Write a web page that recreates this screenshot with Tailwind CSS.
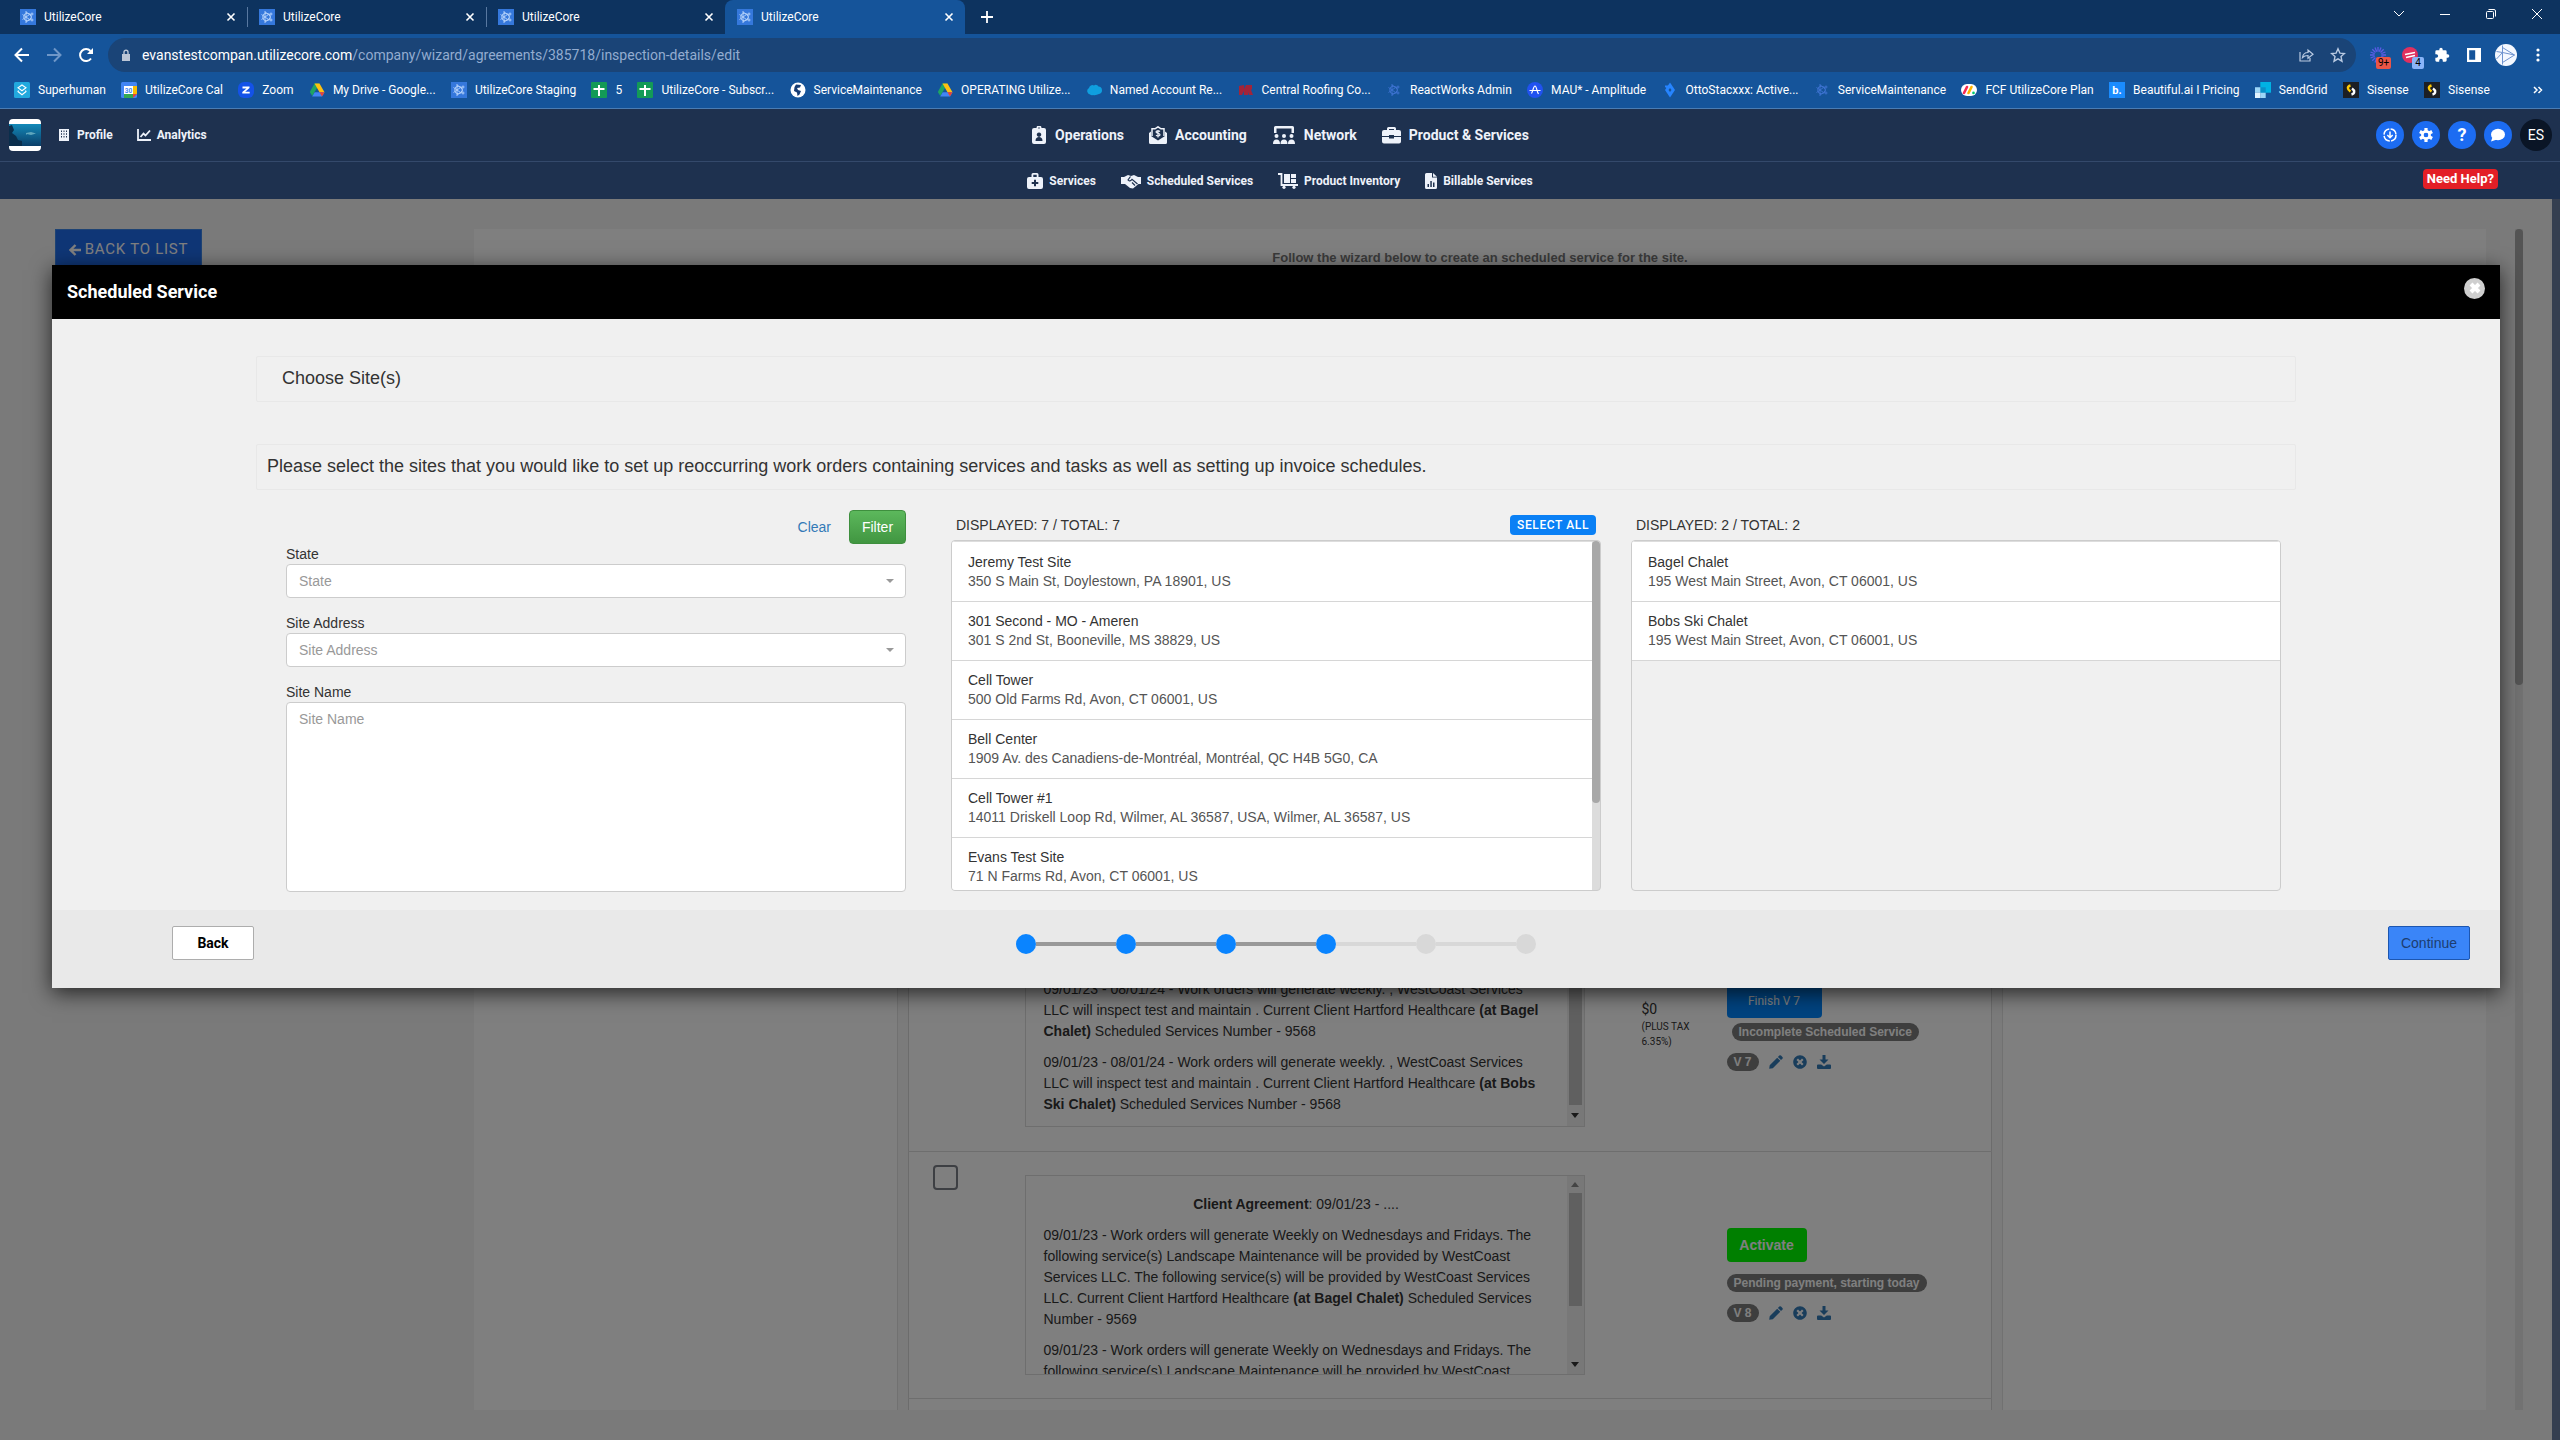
<!DOCTYPE html>
<html lang="en">
<head>
  <meta charset="UTF-8">
  <meta name="viewport" content="width=device-width, initial-scale=1.0">
  <title>UtilizeCore</title>
  <script src="https://cdn.jsdelivr.net/npm/@tailwindcss/browser@4"></script>
</head>
<body class="h-screen overflow-hidden flex flex-col font-['Liberation_Sans',Arial,sans-serif] text-sm text-[#333]">

  <!-- Icon sprite -->
  <svg class="hidden" xmlns="http://www.w3.org/2000/svg">
    <symbol id="i-core" viewBox="0 0 16 16"><g fill="none" stroke="currentColor" stroke-width="0.9"><path d="M6 2v12M6 3l6 4.500M6 13l6-4.500M2.500 5.500l7 5M2.500 10.500l7-5"/><circle cx="7.500" cy="8" r="3.800"/><circle cx="12" cy="5" r="1"/><circle cx="12" cy="11" r="1"/></g></symbol>
    <symbol id="i-utilize" viewBox="0 0 16 16"><rect width="16" height="16" fill="#3578dc"/><use href="#i-core" color="#b7d4fb"/></symbol>
    <symbol id="i-atom" viewBox="0 0 16 16"><use href="#i-core" color="#3f74d4"/></symbol>
    <symbol id="i-superhuman" viewBox="0 0 16 16"><rect width="16" height="16" rx="1.500" fill="#22a9de"/><g fill="none" stroke="#fff" stroke-width="1.100"><path d="M8 3l4 2.800L8 8.800 4 5.800zM4.500 8.500L4 9.500l4 3.200 4-3.200-.5-1"/></g></symbol>
    <symbol id="i-cal" viewBox="0 0 16 16"><rect width="16" height="16" rx="1.500" fill="#4285f4"/><path d="M12 4h4v8h-4z" fill="#fbbc04"/><path d="M3 12h9v4H3z" fill="#34a853"/><path d="M12 12h4l-4 4z" fill="#ea4335"/><path d="M3 4h9v8H3z" fill="#fff"/><text x="7.500" y="10.500" font-size="6.500" font-weight="700" text-anchor="middle" fill="#4285f4">30</text></symbol>
    <symbol id="i-zoom" viewBox="0 0 16 16"><rect width="16" height="16" rx="6" fill="#1452e8"/><path d="M4.500 4.500h7v1.600l-4.300 3.600h4.500v1.900H4.300V9.900l4.200-3.500h-4z" fill="#fff"/></symbol>
    <symbol id="i-drive" viewBox="0 0 16 16"><path d="M5.500 1.500h5L8 6 3.300 14 .8 10z" fill="#1fa463"/><path d="M5.500 1.500h5l5 8.800h-5z" fill="#fdc010"/><path d="M5.700 10.300h9.800L13 14.500H3.200z" fill="#4285f4"/><path d="M10.500 10.300h5L13 14.500z" fill="#ea4335"/></symbol>
    <symbol id="i-sheet" viewBox="0 0 16 16"><rect width="16" height="16" rx="1" fill="#139a56"/><path d="M7 3h2v3h4.500v2H9v6H7V8H2.500V6H7z" fill="#fff"/></symbol>
    <symbol id="i-globe" viewBox="0 0 16 16"><circle cx="8" cy="8" r="7.500" fill="#fff"/><path d="M6 2.500l5 .5-1 2.500-3 .500 1 2 3 1-1.500 3.500-2 1.500-.5-3.500-3-1.500L4.500 5z" fill="#173d75"/></symbol>
    <symbol id="i-cloud" viewBox="0 0 16 16"><path d="M4 12.500a3.500 3.500 0 0 1-1-6.500 3.500 3.500 0 0 1 5-2.500 3 3 0 0 1 4.500 1A3.800 3.800 0 0 1 13 12c-2 1-4 1.500-6 1-1 .5-2 .3-3-.5z" fill="#0f9fdf"/></symbol>
    <symbol id="i-roof" viewBox="0 0 16 16"><path d="M1 4l5-1v4l2-4h6v4l-1 1 2 5h-4l-1-3v3H6V9l-2 4H1z" fill="#a32439"/></symbol>
    <symbol id="i-amp" viewBox="0 0 16 16"><circle cx="8" cy="8" r="8" fill="#2152f0"/><path d="M2.500 8.500h11M4.500 11.500C6 9 6.500 4 8 4s2 6 3.500 8" fill="none" stroke="#fff" stroke-width="1.200"/></symbol>
    <symbol id="i-jira" viewBox="0 0 16 16"><path d="M8 .5L13 8 8 15.500 3 8z" fill="#2684ff"/><path d="M3 3.500h5v5L3 5z" fill="#2684ff"/><path d="M8 6l1.500 2L8 10 6.500 8z" fill="#15549a"/></symbol>
    <symbol id="i-monday" viewBox="0 0 16 16"><rect y="2" width="16" height="12" rx="6" fill="#fff"/><g stroke-width="2.600" stroke-linecap="round"><path d="M3 11l3-6" stroke="#f62b54"/><path d="M7.500 11l3-6" stroke="#ffb400"/><path d="M12.500 10.800v.100" stroke="#00ca72"/></g></symbol>
    <symbol id="i-beautiful" viewBox="0 0 16 16"><rect width="16" height="16" fill="#1a8cff"/><text x="8" y="12" font-size="11" font-weight="700" text-anchor="middle" fill="#fff">b.</text></symbol>
    <symbol id="i-sendgrid" viewBox="0 0 16 16"><path d="M5.300 0H16v10.700H5.300z" fill="#00b2e3"/><path d="M5.300 5.300h5.400v5.400H5.300z" fill="#0a8fc7"/><path d="M0 5.300h5.300v5.400H0zM5.300 10.700h5.400V16H5.300z" fill="#9dd6f7"/><path d="M0 10.700h5.300V16H0z" fill="#e3f4ff"/></symbol>
    <symbol id="i-sisense" viewBox="0 0 16 16"><rect width="16" height="16" fill="#1c1f24"/><path d="M7.500 3.500C4 4.500 4 7 7.500 9.500" fill="none" stroke="#ffcb05" stroke-width="2.400"/><path d="M9 6.500c3 2 3 5-.5 6" fill="none" stroke="#fff" stroke-width="2.400"/></symbol>
    <symbol id="i-close" viewBox="0 0 16 16"><path d="M4.500 4.500l7 7M11.500 4.500l-7 7" fill="none" stroke="currentColor" stroke-width="1.600"/></symbol>
    <symbol id="i-pencil" viewBox="0 0 14 14"><path d="M10.300.6a1.200 1.200 0 0 1 1.700 0l1.400 1.400a1.200 1.200 0 0 1 0 1.700L12 5.100 8.900 2zM8.200 2.700l3.100 3.100-7.500 7.500L.2 13.800l.5-3.600z" fill="currentColor"/></symbol>
    <symbol id="i-times" viewBox="0 0 512 512"><path fill="currentColor" d="M256 8C119 8 8 119 8 256s111 248 248 248 248-111 248-248S393 8 256 8zm121.600 313.100c4.700 4.700 4.700 12.300 0 17L338 377.600c-4.700 4.700-12.300 4.700-17 0L256 312l-65.100 65.600c-4.700 4.700-12.300 4.700-17 0L134.400 338c-4.700-4.700-4.700-12.300 0-17l65.600-65-65.600-65.100c-4.700-4.700-4.700-12.300 0-17l39.600-39.600c4.700-4.700 12.300-4.700 17 0l65 65.700 65.100-65.600c4.700-4.700 12.300-4.700 17 0l39.600 39.600c4.700 4.700 4.700 12.300 0 17L312 256l65.600 65.100z"/></symbol>
    <symbol id="i-download" viewBox="0 0 14 14"><path d="M5.500 0h3v4.500h3L7 9 2.500 4.500h3zM1 9.500h3.200L7 11.500l2.800-2H13a1 1 0 0 1 1 1V13a1 1 0 0 1-1 1H1a1 1 0 0 1-1-1v-2.500a1 1 0 0 1 1-1z" fill="currentColor"/></symbol>
  </svg>

  <!-- Browser tabs -->
  <div class="shrink-0 h-[34px] bg-[#0d335f] flex items-stretch text-white text-xs font-['Roboto',sans-serif]">
    <div class="flex-1 flex">
      <div class="w-2"></div>
      <div class="w-[239px] flex items-center gap-2 pl-3 pr-2"><svg class="size-4"><use href="#i-utilize"/></svg><span class="flex-1">UtilizeCore</span><button aria-label="Close tab" class="size-4"><svg class="size-4"><use href="#i-close"/></svg></button></div>
      <div class="w-[239px] flex items-center gap-2 pl-3 pr-2"><span class="absolute -ml-3 w-px h-5 bg-[#5878a0]"></span><svg class="size-4"><use href="#i-utilize"/></svg><span class="flex-1">UtilizeCore</span><button aria-label="Close tab" class="size-4"><svg class="size-4"><use href="#i-close"/></svg></button></div>
      <div class="w-[239px] flex items-center gap-2 pl-3 pr-2"><span class="absolute -ml-3 w-px h-5 bg-[#5878a0]"></span><svg class="size-4"><use href="#i-utilize"/></svg><span class="flex-1">UtilizeCore</span><button aria-label="Close tab" class="size-4"><svg class="size-4"><use href="#i-close"/></svg></button></div>
      <div class="w-[240px] flex items-center gap-2 pl-3 pr-2 bg-[#15549a] rounded-t-lg"><svg class="size-4"><use href="#i-utilize"/></svg><span class="flex-1">UtilizeCore</span><button aria-label="Close tab" class="size-4"><svg class="size-4"><use href="#i-close"/></svg></button></div>
      <button aria-label="New tab" class="ml-[14px]"><svg class="size-4" viewBox="0 0 16 16"><path d="M8 2v12M2 8h12" stroke="currentColor" stroke-width="1.800"/></svg></button>
    </div>
    <div class="flex h-7">
      <button aria-label="Search tabs" class="w-[46px] grid place-items-center"><svg class="size-3" viewBox="0 0 12 12"><path d="M1 3l5 5 5-5" fill="none" stroke="currentColor"/></svg></button>
      <button aria-label="Minimize" class="w-[46px] grid place-items-center"><svg class="size-3" viewBox="0 0 12 12"><path d="M1 6.500h10" stroke="currentColor"/></svg></button>
      <button aria-label="Restore" class="w-[46px] grid place-items-center"><svg class="size-3" viewBox="0 0 12 12"><g fill="none" stroke="currentColor"><rect x="1.500" y="3.500" width="7" height="7" rx="1"/><path d="M3.500 1.500H9a1.500 1.500 0 0 1 1.500 1.500v5.500"/></g></svg></button>
      <button aria-label="Close window" class="w-[46px] grid place-items-center"><svg class="size-3" viewBox="0 0 12 12"><path d="M1 1l10 10M11 1L1 11" stroke="currentColor"/></svg></button>
    </div>
  </div>

  <!-- Address bar -->
  <div class="shrink-0 h-[38px] pt-1 bg-[#15549a] flex items-center text-white font-['Roboto',sans-serif]">
    <div class="w-[108px] pl-[14px] flex gap-4">
      <button aria-label="Back"><svg class="size-4" viewBox="0 0 16 16"><path d="M8 1.500L1.500 8 8 14.500M1.500 8H15" fill="none" stroke="currentColor" stroke-width="2"/></svg></button>
      <button aria-label="Forward" class="text-[#6f97c8]"><svg class="size-4" viewBox="0 0 16 16"><path d="M8 1.500L14.500 8 8 14.500M14.500 8H1" fill="none" stroke="currentColor" stroke-width="2"/></svg></button>
      <button aria-label="Reload"><svg class="size-4" viewBox="0 0 16 16"><path d="M13 11.500A6 6 0 1 1 12.500 4" fill="none" stroke="currentColor" stroke-width="2"/><path d="M15 1v6H9z" fill="currentColor"/></svg></button>
    </div>
    <div class="flex-1 h-[34px] rounded-full bg-[#1a4477] flex items-center pl-3 pr-[10px]">
      <svg class="w-3 h-3" viewBox="0 0 12 12"><path d="M2 5h8v7H2z" fill="#bcc6d6"/><path d="M4 5V3.200a2 2 0 0 1 4 0V5" fill="none" stroke="#bcc6d6" stroke-width="1.400"/></svg>
      <p class="flex-1 pl-[10px] text-sm">evanstestcompan.utilizecore.com<span class="text-[#93acd0]">/company/wizard/agreements/385718/inspection-details/edit</span></p>
      <button aria-label="Share" class="mr-4 text-[#b9cae2]"><svg class="size-4" viewBox="0 0 16 16"><g fill="none" stroke="currentColor" stroke-width="1.200"><path d="M2 5v9h10v-3"/><path d="M4.500 10.500c.5-3.500 2.500-5 5.500-5V3l5 4.200-5 4V8.500c-2.500 0-4 .5-5.500 2z"/></g></svg></button>
      <button aria-label="Bookmark" class="text-[#b9cae2]"><svg class="size-4" viewBox="0 0 16 16"><path d="M8 1.800l1.900 4.300 4.600.4-3.500 3.100 1 4.600L8 11.800l-4 2.400 1-4.600L1.500 6.500l4.600-.4z" fill="none" stroke="currentColor" stroke-width="1.400"/></svg></button>
    </div>
    <div class="flex items-center gap-4 pl-[14px] pr-[14px]">
      <button aria-label="Loom" class="relative size-4 text-black"><svg class="size-4" viewBox="0 0 16 16"><path d="M8 0v16M0 8h16M2.300 2.300l11.400 11.400M13.700 2.300L2.300 13.700M5 .6l6 14.800M11 .6L5 15.400M.6 5l14.800 6M.6 11l14.800-6" stroke="#5b5ce6" stroke-width="1.300"/><circle cx="8" cy="8" r="3.500" fill="#15549a"/></svg><span class="absolute left-1.5 top-2.5 px-0.5 h-3 rounded-xs bg-[#ea5547] text-[10px] leading-3">9+</span></button>
      <button aria-label="Extension" class="relative size-4 text-black"><svg class="size-4" viewBox="0 0 16 16"><circle cx="8" cy="8" r="8" fill="#e0305f"/><path d="M3 7.500l10-2M4 10.500l9-2" stroke="#fff" stroke-width="1.600"/></svg><span class="absolute left-2.5 top-2.5 px-0.5 w-3 h-3 rounded-xs bg-[#8ab4f8] text-[10px] leading-3">4</span></button>
      <button aria-label="Extensions"><svg class="size-4" viewBox="0 0 24 24"><path d="M20.500 11H19V7a2 2 0 0 0-2-2h-4V3.500a2.500 2.500 0 0 0-5 0V5H4a2 2 0 0 0-2 2v3.800h1.500a2.700 2.700 0 0 1 0 5.400H2V20a2 2 0 0 0 2 2h3.800v-1.500a2.700 2.700 0 0 1 5.400 0V22H17a2 2 0 0 0 2-2v-4h1.500a2.500 2.500 0 0 0 0-5z" fill="currentColor"/></svg></button>
      <button aria-label="Side panel"><svg class="size-4" viewBox="0 0 16 16"><path d="M1 1h14v14H1zM3.200 3.200v9.600h6V3.200z" fill="currentColor" fill-rule="evenodd"/></svg></button>
      <button aria-label="Profile" class="-mx-[3px]"><svg class="size-[22px]" viewBox="0 0 22 22"><circle cx="11" cy="11" r="11" fill="#f4f8ff"/><g fill="none" stroke="#6f93cf"><path d="M7.500 1.500v19M7.500 3.500l12 7.500-12 7.500M1.500 7.500l6 1 12 2.500M1.500 15l6-6.500"/></g></svg></button>
      <button aria-label="Menu"><svg class="w-4 h-4" viewBox="0 0 16 16" fill="currentColor"><circle cx="8" cy="3" r="1.600"/><circle cx="8" cy="8" r="1.600"/><circle cx="8" cy="13" r="1.600"/></svg></button>
    </div>
  </div>

  <!-- Bookmarks -->
  <div class="shrink-0 h-[37px] bg-[#15549a] border-b border-[#4a7cb3] flex items-center pl-[14px] pr-[14px] text-white text-xs font-['Roboto',sans-serif]">
    <nav id="bookmarks" class="flex-1 flex justify-between whitespace-nowrap"></nav>
    <button aria-label="More bookmarks" class="w-14 flex justify-end"><svg class="size-4" viewBox="0 0 16 16"><path d="M4 5l3 3-3 3M8.500 5l3 3-3 3" fill="none" stroke="currentColor" stroke-width="1.500"/></svg></button>
  </div>

  <!-- App header -->
  <header class="shrink-0 bg-[#1e314f] text-[#eef2fa] font-bold font-['Roboto',sans-serif]">
    <div class="h-[53px] border-b border-[#34496b] grid grid-cols-[1fr_auto_1fr] items-center">
      <div class="flex items-center pl-[9px] text-xs">
        <svg class="size-8 rounded-sm" viewBox="0 0 32 32"><defs><linearGradient id="sea" x2="0" y2="1"><stop stop-color="#1389b8"/><stop offset="1" stop-color="#0b3f69"/></linearGradient></defs><path fill="#fff" d="M0 0h32v32H0z"/><path fill="url(#sea)" d="M0 5h32v22H0z"/><path fill="#0a2e4c" d="M0 7l3-1 2 5-2 3 4 3 2 4 4 1v5H0z"/><path fill="#5fa7bd" d="M17 14l5-1 5 1.500-5 1.500-4-1-1 1z"/></svg>
        <a href="#" class="ml-[17px] flex items-center gap-[7px]"><svg class="w-3 h-3" viewBox="0 0 12 12"><path fill="currentColor" fill-rule="evenodd" d="M1 0h10v12H1zM3 1.500V3h1V1.500zm2.500 0V3h1V1.500zm2.500 0V3h1V1.500zM3 4.200v1.500h1V4.200zm2.500 0v1.500h1V4.200zm2.500 0v1.500h1V4.200zM3 7v1.500h1V7zm2.500 0v1.500h1V7zM8 7v1.500h1V7z"/></svg>Profile</a>
        <a href="#" class="ml-6 flex items-center gap-1.5"><svg class="w-[14px] h-3" viewBox="0 0 14 12"><path fill="none" stroke="currentColor" stroke-width="1.800" d="M1 0v11h13M3.500 8l3-3.500 2 2L13 1.500"/></svg>Analytics</a>
      </div>
      <nav class="flex items-center gap-[25px]">
        <a href="#" class="flex items-center gap-2"><svg class="w-4 h-[18px]" viewBox="0 0 16 18"><path fill="currentColor" fill-rule="evenodd" d="M5.500 2a2.500 2.500 0 0 1 5 0H13a2 2 0 0 1 2 2v12a2 2 0 0 1-2 2H3a2 2 0 0 1-2-2V4a2 2 0 0 1 2-2zM8 1.300a.7.700 0 1 0 .01 0zM8 6.500a2.200 2.200 0 1 0 .01 0zM4.500 15h7c0-3-1.500-4-3.500-4s-3.500 1-3.500 4z"/></svg>Operations</a>
        <a href="#" class="flex items-center gap-2"><svg class="w-[18px] h-[18px]" viewBox="0 0 18 18"><path fill="currentColor" d="M0 7l2-1.500V10l7 4.500 7-4.500V5.500L18 7v9.500a1.500 1.500 0 0 1-1.500 1.500h-15A1.500 1.500 0 0 1 0 16.500z"/><path fill="none" stroke="currentColor" stroke-width="1.500" d="M3 10V2.800h3L9 .8l3 2h3V10"/><path fill="none" stroke="currentColor" stroke-width="1.200" d="M11 5.500c-1-1-4-.8-4 .6 0 1.600 4 1 4 2.600 0 1.500-3 1.500-4 .5M9 4v7.500"/></svg>Accounting</a>
        <a href="#" class="flex items-center gap-2"><svg class="w-6 h-[18px]" viewBox="0 0 24 18"><g fill="currentColor"><path d="M2 7V1.500A1.500 1.500 0 0 1 3.500 0h17A1.500 1.500 0 0 1 22 1.500V7h-2.500V2.500h-15V7z"/><circle cx="4.500" cy="10" r="2"/><circle cx="12" cy="10" r="2"/><circle cx="19.500" cy="10" r="2"/><path d="M1 18c0-3 1-4.500 3.500-4.500S8 15 8 18zM8.500 18c0-3 1-4.500 3.500-4.500s3.500 1.500 3.500 4.500zM16 18c0-3 1-4.500 3.500-4.500S23 15 23 18z"/></g></svg>Network</a>
        <a href="#" class="flex items-center gap-2"><svg class="w-[19px] h-[18px]" viewBox="0 0 19 18"><path fill="currentColor" fill-rule="evenodd" d="M5 4V2.500A1.500 1.500 0 0 1 6.500 1h6A1.500 1.500 0 0 1 14 2.500V4h3a2 2 0 0 1 2 2v4h-7V9H7v1H0V6a2 2 0 0 1 2-2zM7 4h5V3H7z"/><path fill="currentColor" d="M0 11h7v1.500h5V11h7v4.500a2 2 0 0 1-2 2H2a2 2 0 0 1-2-2z"/></svg>Product &amp; Services</a>
      </nav>
      <div class="flex items-center justify-end gap-2 pr-2">
        <button aria-label="Downloads" class="size-7 rounded-full bg-[#1c6cf2] grid place-items-center"><svg class="size-4" viewBox="0 0 16 16"><circle cx="8" cy="8" r="6" fill="none" stroke="#fff" stroke-width="1.500" stroke-dasharray="8 1.400"/><path d="M8 4.500v6M5.300 8L8 10.700 10.700 8" fill="none" stroke="#fff" stroke-width="1.500"/></svg></button>
        <button aria-label="Settings" class="size-7 rounded-full bg-[#1c6cf2] grid place-items-center"><svg class="size-4" viewBox="0 0 16 16"><path d="M8 1v14M1.900 4.500l12.200 7M1.900 11.500l12.200-7" stroke="#fff" stroke-width="3.200"/><circle cx="8" cy="8" r="3.600" fill="#1c6cf2" stroke="#fff" stroke-width="2.600"/><circle cx="8" cy="8" r="2.100" fill="#1c6cf2"/></svg></button>
        <button aria-label="Help" class="size-7 rounded-full bg-[#1c6cf2] grid place-items-center text-lg leading-7 font-bold text-white">?</button>
        <button aria-label="Chat" class="size-7 rounded-full bg-[#1c6cf2] grid place-items-center"><svg class="size-4" viewBox="0 0 16 16"><ellipse cx="8" cy="7.500" rx="7" ry="5.800" fill="#fff"/><path d="M2.500 10L1 14.500l6-2z" fill="#fff"/></svg></button>
        <button class="size-8 rounded-full bg-[#0a1526] text-sm font-normal text-white">ES</button>
      </div>
    </div>
    <div class="h-[37px] grid grid-cols-[1fr_auto_1fr] items-center text-xs">
      <div></div>
      <nav class="flex items-center gap-[25px]">
        <a href="#" class="flex items-center gap-1.5"><svg class="size-4" viewBox="0 0 16 16"><path fill="currentColor" fill-rule="evenodd" d="M4.500 4V1.500A1.500 1.500 0 0 1 6 0h4a1.500 1.500 0 0 1 1.500 1.500V4H14a2 2 0 0 1 2 2v8a2 2 0 0 1-2 2H2a2 2 0 0 1-2-2V6a2 2 0 0 1 2-2zM6.300 4h3.400V1.800H6.300zM7 6.700v2.300H4.700v2H7v2.300h2V11h2.300V9H9V6.700z"/></svg>Services</a>
        <a href="#" class="flex items-center gap-1.5"><svg class="w-5 h-4" viewBox="0 0 20 16"><path fill="currentColor" d="M0 4h3l4-2 3 1 3-1 4 2h3v7h-2.500L12 15.500 9 15l-5-4H0z"/><path fill="none" stroke="#1e314f" stroke-width="1.200" d="M9.500 3.500L7 7c1 1.500 2.500 1 4-.7L16.500 11M11 9.500l3 3"/></svg>Scheduled Services</a>
        <a href="#" class="flex items-center gap-1.5"><svg class="w-5 h-4" viewBox="0 0 20 16"><path fill="none" stroke="currentColor" stroke-width="1.800" d="M0 1h3.500v11H20"/><g fill="currentColor"><path d="M6 1h6v9H6zM13 1h5v4h-5zM13 6h5v4h-5z"/><circle cx="6" cy="14.300" r="1.600"/><circle cx="16" cy="14.300" r="1.600"/></g></svg>Product Inventory</a>
        <a href="#" class="flex items-center gap-1.5"><svg class="w-3 h-4" viewBox="0 0 12 16"><path fill="currentColor" fill-rule="evenodd" d="M1.500 0H7v4.500h5v10a1.500 1.500 0 0 1-1.500 1.500h-9A1.500 1.500 0 0 1 0 14.500v-13A1.500 1.500 0 0 1 1.500 0zM8 0l4 3.700H8zM2.500 11v3H4v-3zm2.800-3v6h1.500V8zM8 9.500V14h1.500V9.500z"/></svg>Billable Services</a>
      </nav>
      <div class="flex justify-end pr-[62px] pb-1"><button class="h-5 px-1 rounded-sm bg-[#e31f26] text-white text-[13px] leading-5">Need Help?</button></div>
    </div>
  </header>

  <div class="flex-1 min-h-0 flex">
    <div class="flex-1 relative flex bg-[#f4f4f4] overflow-hidden">

      <!-- Page under the dialog -->
      <aside class="w-[474px] pt-[30px] pl-[55px]">
        <button class="w-[147px] h-[42px] border border-[#3d87e8] bg-[#1f6cec] text-white font-['Roboto',sans-serif] text-[15px] tracking-wider flex items-center justify-center gap-1"><svg class="size-3" viewBox="0 0 12 12"><path d="M6.500 1l-5 5 5 5M2 6h10" fill="none" stroke="currentColor" stroke-width="2.400"/></svg>BACK TO LIST</button>
      </aside>
      <main class="flex-1 my-[30px] bg-white flex flex-col overflow-hidden">
        <p class="pt-[19px] text-center font-bold text-[13px] leading-5 text-[#777]">Follow the wizard below to create an scheduled service for the site.</p>
        <div class="flex-1 min-h-0 grid grid-cols-[423fr_1106fr_483fr]">
          <div></div>
          <div class="min-h-0 flex flex-col justify-end px-[10px] bg-[#f6f6f6] border-x border-[#e2e2e2]">
            <table class="w-full shrink-0 table-fixed bg-white border-x border-[#d8d8d8] border-collapse">
              <colgroup><col class="w-[116px]"><col class="w-[617px]"><col class="w-[85px]"><col></colgroup>
              <tbody>
                <tr class="h-[247px] border-b border-[#dcdcdc]">
                  <td></td>
                  <td>
                    <div class="w-[560px] h-[200px] border border-[#dcdcdc] flex">
                      <div class="flex-1 min-w-0 overflow-hidden flex flex-col justify-end gap-[10px] px-[18px] pb-[11px] leading-[21px]">
                        <p>09/01/23 - 08/01/24 - Work orders will generate weekly. , WestCoast Services LLC will inspect test and maintain . Current Client Hartford Healthcare <b>(at Bagel Chalet)</b> Scheduled Services Number - 9568</p>
                        <p>09/01/23 - 08/01/24 - Work orders will generate weekly. , WestCoast Services LLC will inspect test and maintain . Current Client Hartford Healthcare <b>(at Bobs Ski Chalet)</b> Scheduled Services Number - 9568</p>
                      </div>
                      <div class="w-[17px] bg-[#f1f1f1] flex flex-col items-center">
                        <div class="mt-[40px] flex-1 w-[13px] bg-[#c1c1c1]"></div>
                        <div class="h-[21px] grid place-items-center"><svg class="w-2 h-[5px]" viewBox="0 0 8 5"><path d="M0 0h8L4 5z" fill="#333"/></svg></div>
                      </div>
                    </div>
                  </td>
                  <td class="font-['Roboto',sans-serif] text-sm leading-5"><div class="pb-1.5">$0<br><span class="block text-[10px] leading-[15px]">(PLUS TAX<br>6.35%)</span></div></td>
                  <td>
                    <button class="block w-[95px] h-[34px] rounded-sm bg-[#0087ff] text-white text-xs font-['Roboto',sans-serif]">Finish V 7</button>
                    <span class="block w-fit ml-[5px] mt-[5px] h-[18px] px-[7px] rounded-full bg-[#7c7c7c] text-white font-bold text-xs leading-[18px]">Incomplete Scheduled Service</span>
                    <div class="mt-3 flex items-center gap-[10px] text-[#337ab7]">
                      <span class="w-8 h-[18px] rounded-full bg-[#7c7c7c] text-white font-bold text-xs leading-[18px] text-center">V 7</span>
                      <a href="#" aria-label="Edit"><svg class="size-[14px]"><use href="#i-pencil"/></svg></a>
                      <a href="#" aria-label="Cancel"><svg class="size-[14px]"><use href="#i-times"/></svg></a>
                      <a href="#" aria-label="Download"><svg class="size-[14px]"><use href="#i-download"/></svg></a>
                    </div>
                  </td>
                </tr>
                <tr class="h-[247px] border-b border-[#dcdcdc]">
                  <td class="align-top pt-[13px] pl-6"><input type="checkbox" aria-label="Select agreement" class="block size-[25px] appearance-none rounded-sm border-2 border-[#7b7e86] bg-white"></td>
                  <td>
                    <div class="w-[560px] h-[200px] border border-[#dcdcdc] flex">
                      <div class="flex-1 min-w-0 overflow-hidden space-y-[10px] px-[18px] pt-[18px] leading-[21px]">
                        <p class="text-center"><b>Client Agreement</b>: 09/01/23 - ....</p>
                        <p>09/01/23 - Work orders will generate Weekly on Wednesdays and Fridays. The following service(s) Landscape Maintenance will be provided by WestCoast Services LLC. The following service(s) will be provided by WestCoast Services LLC. Current Client Hartford Healthcare <b>(at Bagel Chalet)</b> Scheduled Services Number - 9569</p>
                        <p>09/01/23 - Work orders will generate Weekly on Wednesdays and Fridays. The following service(s) Landscape Maintenance will be provided by WestCoast</p>
                      </div>
                      <div class="w-[17px] bg-[#f1f1f1] flex flex-col items-center">
                        <div class="h-[17px] grid place-items-center"><svg class="w-2 h-[5px]" viewBox="0 0 8 5"><path d="M0 5h8L4 0z" fill="#888"/></svg></div>
                        <div class="h-[113px] w-[13px] bg-[#c1c1c1]"></div>
                        <div class="flex-1"></div>
                        <div class="h-[19px] grid place-items-center"><svg class="w-2 h-[5px]" viewBox="0 0 8 5"><path d="M0 0h8L4 5z" fill="#333"/></svg></div>
                      </div>
                    </div>
                  </td>
                  <td></td>
                  <td>
                    <button class="block w-20 h-[34px] rounded-sm bg-[#00ff00] text-white font-bold text-sm">Activate</button>
                    <span class="block w-fit mt-3 h-[18px] px-[7px] rounded-full bg-[#7c7c7c] text-white font-bold text-xs leading-[18px]">Pending payment, starting today</span>
                    <div class="mt-3 flex items-center gap-[10px] text-[#337ab7]">
                      <span class="w-8 h-[18px] rounded-full bg-[#7c7c7c] text-white font-bold text-xs leading-[18px] text-center">V 8</span>
                      <a href="#" aria-label="Edit"><svg class="size-[14px]"><use href="#i-pencil"/></svg></a>
                      <a href="#" aria-label="Cancel"><svg class="size-[14px]"><use href="#i-times"/></svg></a>
                      <a href="#" aria-label="Download"><svg class="size-[14px]"><use href="#i-download"/></svg></a>
                    </div>
                  </td>
                </tr>
                <tr class="h-3"><td colspan="4"></td></tr>
              </tbody>
            </table>
          </div>
          <div></div>
        </div>
      </main>
      <div class="w-[66px] py-[30px] flex justify-center">
        <div class="w-2 bg-[#e4e4e4]"><div class="h-[456px] rounded-full bg-[#a8a8a8]"></div></div>
      </div>

      <!-- Dialog -->
      <div class="absolute inset-0 bg-black/50 pt-[66px] px-[52px]">
        <section role="dialog" aria-label="Scheduled Service" class="bg-[#f0f0f0] shadow-[0_5px_20px_rgba(0,0,0,0.7)]">
          <div class="h-[54px] bg-black text-white flex items-center justify-between pl-[15px] pr-[15px]">
            <h1 class="font-['Roboto',sans-serif] text-lg font-bold">Scheduled Service</h1>
            <button aria-label="Close" class="size-[21px] mb-2 rounded-full bg-[#cfcfcf] grid place-items-center"><svg class="size-3" viewBox="0 0 12 12"><path d="M2 2l8 8M10 2l-8 8" stroke="#fff" stroke-width="4"/></svg></button>
          </div>
          <div class="w-5/6 mx-auto pt-[37px] pb-[18px]">
            <h2 class="h-[46px] px-[25px] border border-[#e8e8e8] rounded-xs text-lg leading-[42px]">Choose Site(s)</h2>
            <p class="mt-[42px] h-[46px] px-[10px] border border-[#e8e8e8] rounded-xs text-lg leading-[42px]">Please select the sites that you would like to set up reoccurring work orders containing services and tasks as well as setting up invoice schedules.</p>
            <div class="mt-5 grid grid-cols-3">
              <form class="px-[30px] flex flex-col">
                <div class="flex justify-end items-center">
                  <a href="#" class="mr-[18px] text-[#337ab7]">Clear</a>
                  <button type="button" class="h-[34px] w-[57px] rounded-sm border border-[#3e8f3e] bg-linear-to-b from-[#5cb85c] to-[#419641] text-white">Filter</button>
                </div>
                <label for="state" class="leading-5">State</label>
                <div class="relative mb-[15px]">
                  <select id="state" class="block w-full h-[34px] px-3 appearance-none rounded-sm border border-[#ccc] bg-white text-[#999]"><option>State</option></select>
                  <svg class="absolute right-3 top-[15px] w-2 h-1" viewBox="0 0 8 4"><path d="M0 0h8L4 4z" fill="#999"/></svg>
                </div>
                <label for="address" class="leading-5">Site Address</label>
                <div class="relative mb-[15px]">
                  <select id="address" class="block w-full h-[34px] px-3 appearance-none rounded-sm border border-[#ccc] bg-white text-[#999]"><option>Site Address</option></select>
                  <svg class="absolute right-3 top-[15px] w-2 h-1" viewBox="0 0 8 4"><path d="M0 0h8L4 4z" fill="#999"/></svg>
                </div>
                <label for="name" class="leading-5">Site Name</label>
                <textarea id="name" placeholder="Site Name" class="block w-full h-[190px] px-3 py-1.5 resize-none rounded-sm border border-[#ccc] bg-white placeholder:text-[#999]"></textarea>
              </form>
              <div class="px-[15px]">
                <div class="h-[30px] px-[5px] flex items-center justify-between">
                  <span>DISPLAYED: 7 / TOTAL: 7</span>
                  <button class="h-5 px-[7px] rounded-sm bg-[#0a80f5] text-white font-['Roboto',sans-serif] text-xs font-medium tracking-wider">SELECT ALL</button>
                </div>
                <div class="h-[351px] flex border border-[#ccc] rounded-sm overflow-hidden bg-[#dcdcdc]">
                  <ul id="available" class="flex-1 h-[349px] overflow-hidden bg-white border-t border-[#ddd] pt-px"></ul>
                  <div class="w-2"><div class="h-[262px] rounded-full bg-[#a8a8a8]"></div></div>
                </div>
              </div>
              <div class="px-[15px]">
                <div class="h-[30px] px-[5px] flex items-center"><span>DISPLAYED: 2 / TOTAL: 2</span></div>
                <div class="h-[351px] border border-[#ccc] rounded-sm overflow-hidden">
                  <ul id="selected" class="bg-white border-t border-[#ddd] pt-px"></ul>
                </div>
              </div>
            </div>
          </div>
          <div class="h-[78px] pt-4 bg-[#e9e9e9] grid grid-cols-[1fr_auto_1fr] items-start">
            <div class="pl-[120px]"><button class="w-[82px] h-[34px] rounded-xs border border-[#adadad] bg-white text-black font-['Roboto',sans-serif] font-bold">Back</button></div>
            <div class="h-9 flex items-center">
              <span class="size-5 rounded-full bg-[#0a84ff]"></span><span class="w-20 h-1 bg-[#999]"></span>
              <span class="size-5 rounded-full bg-[#0a84ff]"></span><span class="w-20 h-1 bg-[#999]"></span>
              <span class="size-5 rounded-full bg-[#0a84ff]"></span><span class="w-20 h-1 bg-[#999]"></span>
              <span class="size-5 rounded-full bg-[#0a84ff]"></span><span class="w-20 h-1 bg-[#d8d8d8]"></span>
              <span class="size-5 rounded-full bg-[#d8d8d8]"></span><span class="w-20 h-1 bg-[#d8d8d8]"></span>
              <span class="size-5 rounded-full bg-[#d8d8d8]"></span>
            </div>
            <div class="pr-[30px] flex justify-end"><button class="w-[82px] h-[34px] rounded-xs border border-[#1c56b0] bg-[#3a85f8] text-[#1d3d70]">Continue</button></div>
          </div>
        </section>
      </div>
    </div>
    <div class="w-2 bg-[#353f50]"></div>
  </div>

  <script>
    const bookmarks = [
      ['superhuman', 'Superhuman'], ['cal', 'UtilizeCore Cal'], ['zoom', 'Zoom'], ['drive', 'My Drive - Google...'],
      ['utilize', 'UtilizeCore Staging'], ['sheet', '5'], ['sheet', 'UtilizeCore - Subscr...'], ['globe', 'ServiceMaintenance'],
      ['drive', 'OPERATING Utilize...'], ['cloud', 'Named Account Re...'], ['roof', 'Central Roofing Co...'], ['atom', 'ReactWorks Admin'],
      ['amp', 'MAU* - Amplitude'], ['jira', 'OttoStacxxx: Active...'], ['atom', 'ServiceMaintenance'], ['monday', 'FCF UtilizeCore Plan'],
      ['beautiful', 'Beautiful.ai I Pricing'], ['sendgrid', 'SendGrid'], ['sisense', 'Sisense'], ['sisense', 'Sisense']
    ];
    document.getElementById('bookmarks').innerHTML = bookmarks.map(([icon, label]) => `
      <a href="#" class="flex items-center gap-2"><svg class="size-4"><use href="#i-${icon}"/></svg>${label}</a>`).join('');

    const siteRow = ([name, address]) => `
      <li class="border-b border-[#d6d6d6] px-4 py-[10px] leading-[19px]">
        <div>${name}</div>
        <div class="text-[#555]">${address}</div>
      </li>`;
    const available = [
      ['Jeremy Test Site', '350 S Main St, Doylestown, PA 18901, US'],
      ['301 Second - MO - Ameren', '301 S 2nd St, Booneville, MS 38829, US'],
      ['Cell Tower', '500 Old Farms Rd, Avon, CT 06001, US'],
      ['Bell Center', '1909 Av. des Canadiens-de-Montréal, Montréal, QC H4B 5G0, CA'],
      ['Cell Tower #1', '14011 Driskell Loop Rd, Wilmer, AL 36587, USA, Wilmer, AL 36587, US'],
      ['Evans Test Site', '71 N Farms Rd, Avon, CT 06001, US']
    ];
    const selected = [
      ['Bagel Chalet', '195 West Main Street, Avon, CT 06001, US'],
      ['Bobs Ski Chalet', '195 West Main Street, Avon, CT 06001, US']
    ];
    document.getElementById('available').innerHTML = available.map(siteRow).join('');
    document.getElementById('selected').innerHTML = selected.map(siteRow).join('');
  </script>
</body>
</html>
